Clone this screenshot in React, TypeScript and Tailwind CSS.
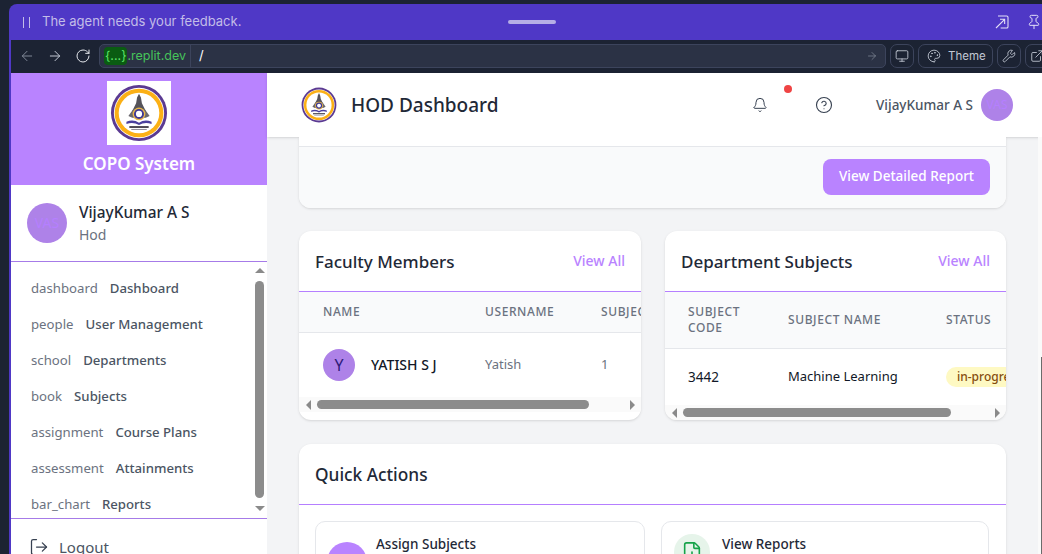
import {
  ArrowLeft,
  ArrowRight,
  RotateCw,
  Monitor,
  Palette,
  Wrench,
  ExternalLink,
  Bell,
  CircleHelp,
  LogOut,
  Pin,
  FilePlus,
} from "lucide-react";

const navItems = [
  ["dashboard", "Dashboard"],
  ["people", "User Management"],
  ["school", "Departments"],
  ["book", "Subjects"],
  ["assignment", "Course Plans"],
  ["assessment", "Attainments"],
  ["bar_chart", "Reports"],
];

const Logo = ({ className }: { className: string }) => (
  <svg viewBox="0 0 60 60" className={className}>
    <circle cx="30" cy="30" r="29" fill="#5b3a92" />
    <circle cx="30" cy="30" r="26" fill="#fff" />
    <circle cx="30" cy="30" r="25.2" fill="#fbb016" />
    <circle cx="30" cy="30" r="21" fill="#fff" />
    <path d="M30 10 L32 14 L33 20 L37 28 L23 28 L27 20 L28 14 Z" fill="#55535a" />
    <path d="M19 33 L24 26 L36 26 L41 33 L37 35 L23 35 Z" fill="#6a686e" />
    <circle cx="30" cy="31" r="6.6" fill="#e9b64a" />
    <circle cx="30" cy="31" r="5.2" fill="#3f3a96" />
    <circle cx="30" cy="31" r="3.2" fill="#fff" />
    <path d="M17 39 Q24 36 30 40 Q36 36 43 39 L43 41.5 Q36 39 30 42.5 Q24 39 17 41.5 Z" fill="#4a3f9e" />
    <rect x="20" y="43.5" width="20" height="2" fill="#4b4653" />
    <rect x="22" y="46.5" width="16" height="1" fill="#8b8794" />
  </svg>
);

const HBar = ({ start, width, rest }: { start: string; width: string; rest: string }) => (
  <div className="flex h-[15px] items-center bg-[#fafafa]">
    <div className={`${start} flex justify-center`}>
      <div className="h-0 w-0 border-y-[5px] border-r-[5px] border-y-transparent border-r-[#8a8a8a]" />
    </div>
    <div className={`${width} h-[9px] rounded-full bg-[#8c8c8c]`} />
    <div className={`${rest} flex justify-end pr-[6px]`}>
      <div className="h-0 w-0 border-y-[5px] border-l-[5px] border-y-transparent border-l-[#8a8a8a]" />
    </div>
  </div>
);

const CardHead = ({ title }: { title: string }) => (
  <div className="flex h-[61px] items-center justify-between border-b border-[#b57fff] px-4">
    <h3 className="mt-[2px] text-[17px] font-medium text-[#1f2937]">{title}</h3>
    <span className="text-sm font-medium text-[#b983ff]">View All</span>
  </div>
);

export default function App() {
  return (
    <div className="flex h-[554px] w-[1042px] flex-col overflow-hidden bg-[#1c2333] pt-1 pl-[9px] font-['Noto_Sans',sans-serif]">
      {/* Replit agent banner */}
      <div className="flex h-[36px] shrink-0 items-center rounded-tl-lg bg-[#4f38c6] pl-[14px] font-['Inter',sans-serif] text-[13px] text-[#c3bde8]">
        <div className="flex w-[485px] shrink-0 items-center">
          <div className="mr-[12px] flex gap-[5px]">
            <div className="h-[11px] w-px bg-[#c3bde8]" />
            <div className="h-[11px] w-px bg-[#c3bde8]" />
          </div>
          The agent needs your feedback.
        </div>
        <div className="h-[4px] w-[48px] rounded-full bg-[#b5aee6]" />
        <div className="ml-auto flex shrink-0 items-center gap-[16px] text-[#e4e1f7]">
          <svg viewBox="0 0 24 24" fill="none" stroke="currentColor" strokeWidth="1.6" className="h-4 w-4">
            <path d="M6 3h13a2 2 0 0 1 2 2v14a2 2 0 0 1-2 2H10" />
            <path d="M3 21L16 8M9 8h7v7" />
          </svg>
          <Pin className="h-4 w-4" strokeWidth={1.5} />
        </div>
      </div>

      <div className="flex min-h-0 flex-1 flex-col border-l-2 border-[#4f38c6]">
        {/* Webview toolbar */}
        <div className="flex h-[33px] shrink-0 items-start gap-[4px] bg-[#1c2333] pt-[4px] font-['Inter',sans-serif] text-[#c2c8d4]">
          <div className="flex h-[24px] w-[84px] shrink-0 items-center gap-[12px] pl-[8px]">
            <ArrowLeft className="h-4 w-4 text-[#7f8796]" strokeWidth={1.5} />
            <ArrowRight className="h-4 w-4" strokeWidth={1.5} />
            <RotateCw className="h-4 w-4 text-[#e4e7ec]" strokeWidth={1.5} />
          </div>
          <div className="flex h-[24px] w-[787px] shrink-0 items-center rounded-[5px] border border-[#3c445c] bg-[#2b3245]">
            <div className="flex h-full w-[91px] shrink-0 items-center border-r border-[#3c445c] pl-[4px] text-[12.5px] text-[#46c45a]">
              <span className="rounded-[4px] bg-[#0a5c12] px-[1px] text-[#5ee36a]">{"{...}"}</span>
              .replit.dev
            </div>
            <span className="ml-[8px] flex-1 text-[13px] text-white">/</span>
            <ArrowRight className="mr-[7px] h-3 w-3 text-[#7f8796]" strokeWidth={1.5} />
          </div>
          <div className="flex h-[24px] w-[24px] shrink-0 items-center justify-center rounded-[7px] border border-[#3c445c]">
            <Monitor className="h-3.5 w-3.5" strokeWidth={1.5} />
          </div>
          <div className="flex h-[24px] w-[75px] shrink-0 items-center gap-[7px] rounded-[7px] border border-[#3c445c] pl-[8px] text-[11.5px]">
            <Palette className="h-3.5 w-3.5" strokeWidth={1.5} />
            <span className="pt-px">Theme</span>
          </div>
          <div className="flex h-[24px] w-[24px] shrink-0 items-center justify-center rounded-[7px] border border-[#3c445c]">
            <Wrench className="h-3.5 w-3.5" strokeWidth={1.5} />
          </div>
          <div className="flex h-[24px] w-[24px] shrink-0 items-center justify-center rounded-[7px] border border-[#3c445c]">
            <ExternalLink className="h-3.5 w-3.5" strokeWidth={1.5} />
          </div>
        </div>

        <div className="flex min-h-0 flex-1">
          {/* Sidebar */}
          <aside className="flex w-[256px] shrink-0 flex-col bg-white">
            <div className="flex h-[112px] shrink-0 flex-col items-center bg-[#b983ff] pt-[8px]">
              <div className="flex h-[64px] w-[64px] shrink-0 items-center justify-center bg-white">
                <Logo className="h-[58px] w-[58px]" />
              </div>
              <div className="mt-[6px] text-[17px] font-semibold text-white">COPO System</div>
            </div>
            <div className="flex h-[77px] shrink-0 items-center gap-[12px] border-b border-[#a67be8] pl-[16px]">
              <div className="flex h-[40px] w-[40px] items-center justify-center rounded-full bg-[#ae82e8] text-sm text-[#b57fff]">
                VAS
              </div>
              <div className="pt-px">
                <div className="text-[15.4px] font-medium leading-[22px] text-[#1f2937]">VijayKumar A S</div>
                <div className="text-sm leading-[21px] text-[#6b7280]">Hod</div>
              </div>
            </div>
            <div className="relative h-[257px] shrink-0 overflow-hidden border-b border-[#a67be8] pt-[9px]">
              {navItems.map(([icon, label]) => (
                <div key={label} className="flex h-[36px] items-center gap-[12px] pl-[20px] text-[13.2px]">
                  <span className="text-[#6b7280]">{icon}</span>
                  <span className="font-medium text-[#4b5563]">{label}</span>
                </div>
              ))}
              {/* Overflow scrollbar of the nav list */}
              <div className="absolute right-[3px] top-0 flex h-full w-[9px] flex-col items-center pt-[6px]">
                <div className="h-0 w-0 border-x-[5px] border-b-[5px] border-x-transparent border-b-[#8a8a8a]" />
                <div className="mt-[8px] h-[217px] w-[9px] rounded-full bg-[#8c8c8c]" />
                <div className="mt-[8px] h-0 w-0 border-x-[5px] border-t-[5px] border-x-transparent border-t-[#8a8a8a]" />
              </div>
            </div>
            <div className="flex items-center gap-[10px] pl-[18px] pt-[17px] text-[15px] text-[#4b5563]">
              <LogOut className="h-5 w-5 text-[#374151]" strokeWidth={1.5} />
              Logout
            </div>
          </aside>

          {/* Main */}
          <main className="flex min-w-0 flex-1 flex-col bg-[#f3f4f6]">
            <header className="flex h-[64px] shrink-0 items-center bg-white pl-[34px] pr-[29px] shadow-sm">
              <Logo className="h-[36px] w-[36px]" />
              <h1 className="ml-[14px] text-[19px] font-medium text-[#1f2937]">HOD Dashboard</h1>
              <div className="relative ml-auto mr-[47px]">
                <Bell className="h-4 w-4 text-[#374151]" strokeWidth={1.5} />
                <div className="absolute -right-[24px] -top-[12px] h-2 w-2 rounded-full bg-[#ef4444]" />
              </div>
              <CircleHelp className="mr-[43px] h-[18px] w-[18px] text-[#374151]" strokeWidth={1.5} />
              <span className="mr-[8px] text-[13.5px] font-medium text-[#4b5563]">VijayKumar A S</span>
              <div className="flex h-[32px] w-[32px] items-center justify-center rounded-full bg-[#ae82e8] text-xs text-[#b57fff]">
                VAS
              </div>
            </header>

            <div className="flex min-h-0 flex-1">
              <div className="min-w-0 flex-1 overflow-hidden px-[32px]">
                {/* Report card, scrolled under the header */}
                <div className="h-[71px] overflow-hidden rounded-b-xl bg-white shadow-sm">
                  <div className="h-[10px] border-b border-[#e5e7eb]" />
                  <div className="flex h-[61px] items-center justify-end bg-[#f9fafb] px-4 pb-[2px]">
                    <button className="h-[36px] w-[167px] rounded-lg bg-[#b983ff] text-[13.5px] font-medium text-white">
                      View Detailed Report
                    </button>
                  </div>
                </div>

                <div className="mt-[23px] grid grid-cols-[342px_341px] gap-[24px]">
                  <div className="h-[189px] overflow-hidden rounded-xl bg-white shadow-sm">
                    <CardHead title="Faculty Members" />
                    <div className="h-[105px] overflow-hidden">
                      <div className="flex h-[41px] w-[420px] items-center border-b border-[#e5e7eb] bg-[#f9fafb] pl-[24px] text-xs font-medium uppercase tracking-wider text-[#6b7280]">
                        <span className="w-[162px]">Name</span>
                        <span className="w-[116px]">Username</span>
                        <span>Subjects</span>
                      </div>
                      <div className="flex h-[64px] items-center pl-[24px] text-[13px]">
                        <div className="flex w-[162px] items-center gap-[16px]">
                          <div className="flex h-[32px] w-[32px] items-center justify-center rounded-full bg-[#ae82e8] text-base text-[#2e1a7a]">
                            Y
                          </div>
                          <span className="text-sm font-medium text-[#111827]">YATISH S J</span>
                        </div>
                        <span className="w-[116px] text-[#6b7280]">Yatish</span>
                        <span className="text-[#6b7280]">1</span>
                      </div>
                    </div>
                    <HBar start="w-[18px]" width="w-[272px]" rest="w-[52px]" />
                  </div>

                  <div className="h-[189px] overflow-hidden rounded-xl bg-white shadow-sm">
                    <CardHead title="Department Subjects" />
                    <div className="h-[113px] overflow-hidden">
                      <div className="flex h-[57px] w-[460px] items-center border-b border-[#e5e7eb] bg-[#f9fafb] pl-[23px] text-xs font-medium uppercase tracking-wider text-[#6b7280]">
                        <span className="w-[100px] leading-4">
                          Subject
                          <br />
                          Code
                        </span>
                        <span className="w-[158px]">Subject Name</span>
                        <span>Status</span>
                      </div>
                      <div className="flex h-[56px] w-[460px] items-center pl-[23px] text-[13px] text-[#111827]">
                        <span className="w-[100px] text-[13.5px]">3442</span>
                        <span className="w-[158px]">Machine Learning</span>
                        <span className="rounded-full bg-[#fef9c3] px-[11px] py-[2px] text-xs font-medium text-[#854d0e]">
                          in-progress
                        </span>
                      </div>
                    </div>
                    <HBar start="w-[18px]" width="w-[268px]" rest="w-[55px]" />
                  </div>
                </div>

                <div className="mt-[24px] rounded-xl bg-white pb-[24px] shadow-sm">
                  <div className="flex h-[61px] items-center border-b border-[#b57fff] px-4">
                    <h3 className="mt-[2px] text-[17.3px] font-medium text-[#1f2937]">Quick Actions</h3>
                  </div>
                  <div className="grid grid-cols-[330px_328px] gap-[16px] p-4">
                    <div className="flex h-[80px] gap-[9px] rounded-[10px] border border-[#e5e7eb] pl-[11px] pt-[12px]">
                      <div className="mt-[8px] h-[40px] w-[40px] shrink-0 rounded-full bg-[#b983ff]" />
                      <span className="text-[13.5px] font-medium text-[#1f2937]">Assign Subjects</span>
                    </div>
                    <div className="flex h-[80px] gap-[12px] rounded-[10px] border border-[#e5e7eb] pl-[12px] pt-[12px]">
                      <div className="flex h-[36px] w-[36px] shrink-0 items-center justify-center rounded-full bg-[#e6f4ea]">
                        <FilePlus className="h-[22px] w-[22px] text-[#16a34a]" strokeWidth={1.75} />
                      </div>
                      <span className="text-[13.5px] font-medium text-[#1f2937]">View Reports</span>
                    </div>
                  </div>
                </div>
              </div>

              {/* Page scrollbar at the right edge */}
              <div className="flex w-[4px] shrink-0 justify-end bg-[#fafafa] pt-[220px]">
                <div className="h-full w-px bg-[#6b6b6b]" />
              </div>
            </div>
          </main>
        </div>
      </div>
    </div>
  );
}
